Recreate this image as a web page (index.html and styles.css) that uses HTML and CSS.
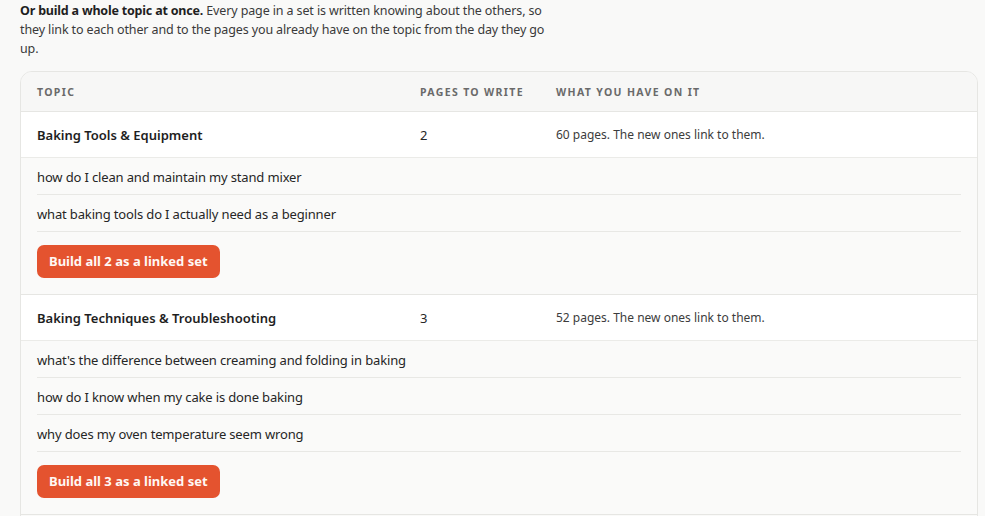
FILE: index.html
```html
<!DOCTYPE html>
<html lang="en">
<head>
<meta charset="utf-8">
<title>Build a topic</title>
<link rel="stylesheet" href="styles.css">
</head>
<body>
<p class="intro"><strong>Or build a whole topic at once.</strong> Every page in a set is written knowing about the others, so they link to each other and to the pages you already have on the topic from the day they go up.</p>
<section class="card">
  <div class="row head">
    <span class="cell">Topic</span>
    <span class="cell">Pages to write</span>
    <span class="cell">What you have on it</span>
  </div>
  <div class="group">
    <div class="row topic">
      <strong class="cell">Baking Tools &amp; Equipment</strong>
      <span class="cell">2</span>
      <span class="cell have">60 pages. The new ones link to them.</span>
    </div>
    <ul class="questions">
      <li>how do I clean and maintain my stand mixer</li>
      <li>what baking tools do I actually need as a beginner</li>
    </ul>
    <div class="actions"><button class="build">Build all 2 as a linked set</button></div>
  </div>
  <div class="group">
    <div class="row topic">
      <strong class="cell">Baking Techniques &amp; Troubleshooting</strong>
      <span class="cell">3</span>
      <span class="cell have">52 pages. The new ones link to them.</span>
    </div>
    <ul class="questions">
      <li>what's the difference between creaming and folding in baking</li>
      <li>how do I know when my cake is done baking</li>
      <li>why does my oven temperature seem wrong</li>
    </ul>
    <div class="actions"><button class="build">Build all 3 as a linked set</button></div>
  </div>
</section>
</body>
</html>
```

FILE: styles.css
```css
* { box-sizing: border-box; }
html, body { margin: 0; }
body {
  background: #f9f9f8;
  color: #262626;
  font-family: "Noto Sans", "Open Sans", sans-serif;
  font-size: 13px;
  padding: 1px 7px 0 20px;
}
.intro {
  margin: 0;
  max-width: 535px;
  font-size: 12.5px;
  letter-spacing: -0.12px;
  line-height: 19px;
  color: #3a3a3a;
}
.intro strong { color: #1f1f1f; font-weight: 700; letter-spacing: -0.2px; }
.card {
  margin-top: 13px;
  padding-bottom: 12px;
  border: 1px solid #e6e6e3;
  border-radius: 12px;
  background: #fafaf9;
  overflow: hidden;
}
.row {
  display: grid;
  grid-template-columns: 383px 136px 1fr;
  align-items: center;
}
.cell { padding: 0 16px; }
.head {
  height: 40px;
  border-bottom: 1px solid #e6e6e3;
  background: #f7f7f6;
  font-size: 10.5px;
  font-weight: 700;
  letter-spacing: 1.35px;
  text-transform: uppercase;
  color: #6a6a6a;
}
.group { border-bottom: 1px solid #e6e6e3; }
.topic {
  height: 46px;
  background: #fff;
  border-bottom: 1px solid #ebebe8;
}
.topic strong { font-weight: 600; color: #1e1e1e; }
.have { font-size: 12px; color: #3c3c3c; }
.questions {
  list-style: none;
  margin: 0 16px;
  padding: 0;
}
.questions li {
  height: 37px;
  line-height: 38px;
  letter-spacing: -0.15px;
  border-bottom: 1px solid #e8e8e5;
  color: #262626;
}
.actions { padding: 13px 16px 16px; }
.build {
  height: 33px;
  padding: 0 12px 1px;
  border: 0;
  border-radius: 7px;
  background: #e4532f;
  color: #fff8f5;
  font-family: inherit;
  font-size: 13px;
  font-weight: 700;
  cursor: pointer;
}
```
